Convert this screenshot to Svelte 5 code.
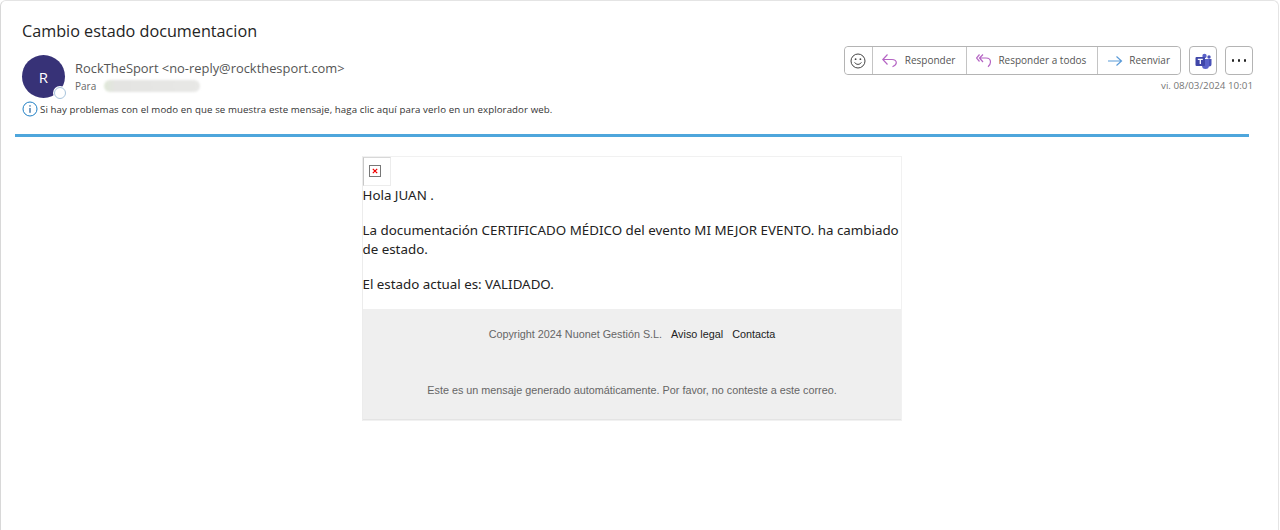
<script>
    const actions = [
        { label: 'Responder', icon: 'reply' },
        { label: 'Responder a todos', icon: 'replyAll' },
        { label: 'Reenviar', icon: 'forward' }
    ]
</script>

<div class="window">
    <header class="head">
        <h1 class="subject">Cambio estado documentacion</h1>
        <div class="sender-row">
            <div class="avatar">
                R
                <span class="presence"></span>
            </div>
            <div class="sender">
                <div class="from">RockTheSport &lt;no-reply@rockthesport.com&gt;</div>
                <div class="to">Para <span class="blur"></span></div>
            </div>
            <div class="tools">
                <div class="buttons">
                    <div class="group">
                        <button class="btn smile" aria-label="Reaccionar">
                            <svg width="16" height="16" viewBox="0 0 16 16" fill="none" stroke="#444" stroke-width="1">
                                <circle cx="8" cy="8" r="7" />
                                <circle cx="5.6" cy="6.2" r=".9" fill="#444" stroke="none" />
                                <circle cx="10.4" cy="6.2" r=".9" fill="#444" stroke="none" />
                                <path d="M4.6 9.4c1.6 2.6 5.2 2.6 6.8 0" />
                            </svg>
                        </button>
                        {#each actions as a}
                            <button class="btn">
                                {#if a.icon === 'reply'}
                                    <svg width="16" height="16" viewBox="0 0 16 16" fill="none" stroke="#b565c4" stroke-width="1.2">
                                        <path d="M5.5 1.500.8 6.500l4.700 5M.8 6.500H10c2.800 0 4.300 1.300 4.300 3.300 0 1.500-1.300 2.900-3.800 3.900" />
                                    </svg>
                                {:else if a.icon === 'replyAll'}
                                    <svg width="16" height="16" viewBox="0 0 16 16" fill="none" stroke="#b565c4" stroke-width="1.2">
                                        <path d="M3.500 1.500.5 5l3 3.500M7 1.500 3.500 5 7 9M3.500 5H10c3 0 4.500 1.800 4.500 4 0 1.800-1 3.500-2.500 4.700" />
                                    </svg>
                                {:else}
                                    <svg width="16" height="16" viewBox="0 0 16 16" fill="none" stroke="#5b9bd8" stroke-width="1.2">
                                        <path d="M1 8h13.500M9.500 3.500 14.500 8l-5 4.500" />
                                    </svg>
                                {/if}
                                <span>{a.label}</span>
                            </button>
                        {/each}
                    </div>
                    <button class="square" aria-label="Teams">
                        <svg width="17" height="16" viewBox="0 0 17 16">
                            <circle cx="9.500" cy="3" r="2.200" fill="#5b63c9" />
                            <circle cx="14" cy="4" r="1.700" fill="#4a52b8" />
                            <path d="M11.500 6H16.500V11a2.500 2.500 0 0 1-5 0Z" fill="#4a52b8" />
                            <path d="M6 6h8v6.500a3.500 3.500 0 0 1-7 0Z" fill="#5b63c9" />
                            <rect x="0.500" y="4" width="9.500" height="9" rx="1" fill="#3f46a8" />
                            <path d="M2.800 6.300h5M5.300 6.300v4.800" stroke="#fff" stroke-width="1.300" fill="none" />
                        </svg>
                    </button>
                    <button class="square dots" aria-label="Más">
                        <i></i><i></i><i></i>
                    </button>
                </div>
                <div class="date">vi. 08/03/2024 10:01</div>
            </div>
        </div>
        <div class="notice">
            <svg width="16" height="16" viewBox="0 0 16 16" fill="none">
                <circle cx="8" cy="8" r="7" stroke="#1f7fc4" stroke-width="1" />
                <rect x="7.400" y="7" width="1.200" height="4.800" fill="#1f5f9c" />
                <rect x="7.400" y="4.200" width="1.200" height="1.400" fill="#1f5f9c" />
            </svg>
            <span>Si hay problemas con el modo en que se muestra este mensaje, haga clic aquí para verlo en un explorador web.</span>
        </div>
    </header>

    <div class="rule"></div>

    <main class="mail">
        <div class="card">
            <div class="broken">
                <span class="broken-box">
                    <svg width="6" height="6" viewBox="0 0 6 6" stroke="#f00000" stroke-width="1.200">
                        <path d="M.8.8l4.400 4.400M5.200.8.8 5.200" />
                    </svg>
                </span>
            </div>
            <div class="body">
                <p class="hello">Hola JUAN .</p>
                <p>La documentación CERTIFICADO MÉDICO del evento MI MEJOR EVENTO. ha cambiado de estado.</p>
                <p>El estado actual es: VALIDADO.</p>
            </div>
            <footer class="foot">
                <div class="links">
                    Copyright 2024 Nuonet Gestión S.L.
                    <a href="#legal">Aviso legal</a>
                    <a href="#contacta">Contacta</a>
                </div>
                <div class="auto">Este es un mensaje generado automáticamente. Por favor, no conteste a este correo.</div>
            </footer>
        </div>
    </main>
</div>

<style>
:global(body) {
    margin: 0;
    background: #fff;
}

.window {
    height: 530px;
    box-sizing: border-box;
    margin-right: 1px;
    border-left: 1px solid #d8d8d8;
    border-right: 1px solid #e4e4e4;
    border-top: 1px solid #e4e4e4;
    border-top-left-radius: 6px;
    border-top-right-radius: 6px;
    font-family: "Open Sans", "Noto Sans", sans-serif;
    overflow: hidden;
}

.head {
    padding: 0 0 0 21px;
}

.subject {
    margin: 0;
    padding-top: 20px;
    font-size: 16.200px;
    line-height: 20px;
    font-weight: 400;
    color: #242424;
}

.sender-row {
    display: flex;
    margin-top: 14px;
    height: 44px;
}

.avatar {
    position: relative;
    width: 43px;
    height: 43px;
    border-radius: 50%;
    background: #373277;
    color: #fff;
    font-size: 15px;
    display: flex;
    align-items: center;
    justify-content: center;
    flex: none;
}

.presence {
    position: absolute;
    right: -1px;
    bottom: -1px;
    width: 10px;
    height: 10px;
    background: #fff;
    border: 1px solid #a8c4dc;
    border-radius: 50%;
    box-shadow: 0 0 0 1px #fff;
}

.sender {
    margin-left: 10px;
    padding-top: 4px;
}

.from {
    font-size: 12.900px;
    line-height: 19px;
    color: #555;
}

.to {
    display: flex;
    align-items: center;
    font-size: 10px;
    line-height: 14px;
    margin-top: 1px;
    color: #666;
}

.blur {
    display: block;
    width: 96px;
    height: 12px;
    margin-left: 8px;
    border-radius: 6px;
    background: linear-gradient(90deg, #dfe8d8, #e4e4e2 12%, #e8e8e6);
    filter: blur(1px);
}

.tools {
    margin-left: auto;
    margin-right: 25px;
    margin-top: -9px;
    display: flex;
    flex-direction: column;
    align-items: flex-end;
}

.buttons {
    display: flex;
    gap: 8px;
}

.group {
    display: flex;
    height: 29px;
    box-sizing: border-box;
    border: 1px solid #b4b4b4;
    border-radius: 4px;
}

.btn {
    display: flex;
    align-items: center;
    gap: 7px;
    height: 27px;
    padding: 0 11px 2px 9px;
    background: #fff;
    border: 0;
    border-left: 1px solid #c4c4c4;
    font: inherit;
    font-size: 10px;
    color: #555;
}

.btn svg {
    margin-top: 2px;
}

.btn:nth-child(n + 3) {
    gap: 6px;
}

.btn.smile {
    border-left: 0;
    padding: 0 5.5px;
    border-radius: 4px 0 0 4px;
}

.btn.smile svg {
    margin-top: 0;
}

.btn:last-child {
    padding-right: 10px;
    border-radius: 0 4px 4px 0;
}

.square {
    width: 28px;
    height: 29px;
    box-sizing: border-box;
    padding: 0;
    background: #fff;
    border: 1px solid #b4b4b4;
    border-radius: 4px;
    display: flex;
    align-items: center;
    justify-content: center;
}

.dots {
    gap: 3.500px;
}

.dots i {
    width: 2.500px;
    height: 2.500px;
    background: #222;
    border-radius: 50%;
}

.date {
    margin-top: 4px;
    font-size: 9.800px;
    line-height: 14px;
    color: #777;
}

.notice {
    display: flex;
    align-items: center;
    gap: 2px;
    margin-top: 2px;
    height: 16px;
    font-size: 9.670px;
    letter-spacing: .1px;
    color: #333;
}

.rule {
    height: 3px;
    margin: 17px 29px 0 14px;
    background: #4ea6dc;
}

.mail {
    display: flex;
    justify-content: center;
    padding-top: 19px;
    padding-right: 16px;
}

.card {
    width: 540px;
    box-sizing: border-box;
    border: 1px solid #f1f1f1;
    border-left-color: #ececec;
    font-family: "Noto Sans", "Open Sans", sans-serif;
    font-size: 13.350px;
    line-height: 19px;
    color: #222;
}

.broken {
    width: 28px;
    height: 29px;
    box-sizing: border-box;
    padding: 7px 0 0 5px;
    border: 1px solid #ececec;
    border-left-color: #c8c8c8;
    border-top-color: #d8d8d8;
}

.broken-box {
    width: 12px;
    height: 12px;
    box-sizing: border-box;
    border: 1px solid #777;
    display: flex;
    align-items: center;
    justify-content: center;
}

.body {
    padding-bottom: 15px;
}

.body p {
    margin: 16px 0 0;
}

.body p.hello {
    margin-top: 0;
}

.foot {
    background: #efefef;
    height: 110px;
    padding-left: 1px;
    border-bottom: 1px solid #e4e4e4;
    font-family: "Liberation Sans", Arial, sans-serif;
    font-size: 10.800px;
    line-height: 14px;
    color: #666;
    text-align: center;
}

.links {
    padding-top: 18px;
}

.links a {
    color: #222;
    text-decoration: none;
    margin-left: 6px;
}

.auto {
    margin-top: 42px;
}
</style>
